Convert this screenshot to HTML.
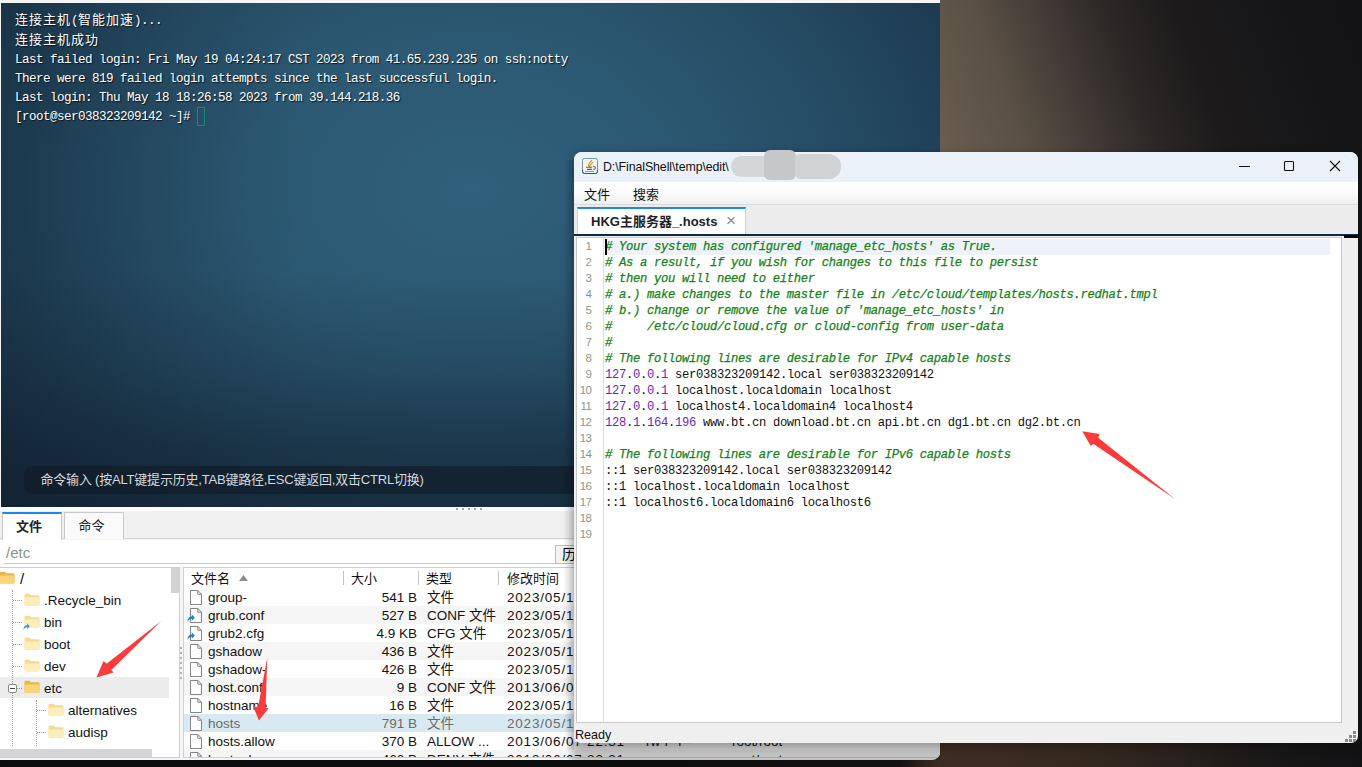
<!DOCTYPE html>
<html lang="zh-CN">
<head>
<meta charset="utf-8">
<title>FinalShell</title>
<style>
*{box-sizing:border-box;margin:0;padding:0}
html,body{width:1362px;height:767px;overflow:hidden}
body{position:relative;background:#151416;font-family:"Liberation Sans","Noto Sans CJK SC",sans-serif;color:#000}
.abs{position:absolute}
/* wallpaper */
#wall{left:940px;top:0;width:422px;height:152px;background:linear-gradient(70deg,#6a5e50 0%,#64594c 5.8%,#5a5045 18.4%,#453d37 30.9%,#2d2827 45.6%,#1c1a1b 60.3%,#171618 77%,#131316 94%)}
#wallb{left:0;top:742px;width:1362px;height:25px;background:linear-gradient(90deg,#0c0c0e 0,#0e0d0e 600px,#141112 900px,#3d2c22 940px,#3b2b21 1010px,#33281f 1100px,#28211d 1180px,#1a1818 1260px,#121214 1362px)}
/* main window */
#main{left:0;top:0;width:940px;height:760px;background:#f5f5f5;border-radius:0 0 8px 0;overflow:hidden}
#term{left:1px;top:3px;width:939px;height:504px;background:
 linear-gradient(90deg,rgba(16,30,44,.26) 0,rgba(16,30,44,.12) 150px,rgba(16,30,44,0) 300px),
 linear-gradient(180deg,rgba(14,26,40,0) 0,rgba(14,26,40,0) 270px,rgba(14,26,40,.2) 375px,rgba(14,26,40,.42) 445px,rgba(14,26,40,.52) 504px),
 radial-gradient(ellipse 650px 480px at 470px 185px,#30607b 0%,#2b5771 35%,#244a62 60%,#1d3c52 80%,#182f42 100%),
 linear-gradient(180deg,#1b384e 0,#1c3b52 40%,#15293a 85%,#13222e 100%)}
.tl{position:absolute;left:14px;white-space:pre;color:#fff;font-family:"Liberation Mono","Noto Sans CJK SC",monospace;font-size:12.6px;letter-spacing:-0.56px;line-height:19px;height:19px;text-shadow:1px 1px 1px #0a141c}
.tl .c{font-size:13px;letter-spacing:1px;font-family:"Noto Sans CJK SC","Liberation Mono",monospace}
#cursor{left:196px;top:104px;width:8px;height:19px;border:1.5px solid #1a8a6a}
#cmd{left:22.5px;top:462.5px;width:930px;height:28px;border-radius:9px;background:rgba(16,26,38,.62)}
#cmd span{position:absolute;left:17px;top:0;line-height:28px;font-size:13px;color:#d4d9dd;white-space:pre;letter-spacing:-0.2px}

/* lower panel */
#sep{left:0;top:507px;width:940px;height:4px;background:#fdfdfd}
#tabs{left:0;top:511px;width:940px;height:28px;background:#f0f0f0;border-bottom:1px solid #d5d5d5}
.tab{position:absolute;top:1px;height:27px;border:1px solid #c8c8c8;border-bottom:none;background:#fff;font-size:13px;text-align:center;line-height:26px;color:#222}
#tab1{left:2px;width:60px;top:1px;height:28px;padding-right:6px;border-top:2px solid #1e88e5;font-weight:bold;line-height:26px;border-color:#1e88e5 #c8c8c8 #fff #c8c8c8}
#tab2{left:64px;width:60px;background:#fafafa;padding-right:5px}
#path{left:0;top:540px;width:940px;height:27px;background:#fff}
#path .p{position:absolute;left:6px;top:0;line-height:26px;font-size:15px;color:#8b928b}
#path .ul{position:absolute;left:4px;top:23px;width:936px;height:1px;background:#c9c9c9}
#hist{left:555px;top:5px;width:60px;height:19px;border:1px solid #bdbdbd;background:#f3f3f3;font-size:14px;line-height:17px;padding-left:6px}
#tree{left:0;top:567px;width:180px;height:191px;background:#fff;border:1px solid #cfcfcf;border-left:none;overflow:hidden}
#list{left:183px;top:567px;width:760px;height:191px;background:#fff;border:1px solid #cfcfcf;overflow:hidden}
.tr{position:absolute;left:0;height:22px;line-height:22px;font-size:13.5px;white-space:pre;color:#111}
.tr.sel{background:#ececec;width:169px}
.fo{position:absolute;top:2.5px;width:16px;height:13.2px}
.lr{position:absolute;left:0;width:760px;height:18px;line-height:18px;font-size:13.5px;white-space:pre;color:#111}
.lr.odd{background:#f5f5f5}
.lr.sel{background:#d9e9f2;color:#6a6a6a}
.lr span{position:absolute;top:1px}
.lr .n{left:24px}.lr .s{left:100px;width:133px;text-align:right}.lr .t{left:243px}.lr .d{left:323px;letter-spacing:.8px}.lr .pm{left:462px}.lr .ow{left:548px}
.fi{position:absolute;left:6px;top:1.5px;width:12px;height:15px}
.hd{position:absolute;top:1px;height:20px;line-height:20px;font-size:13px;color:#111}
.hs{position:absolute;top:3px;width:1px;height:14px;background:#c4c4c4}

/* editor window */
#edsh{left:574px;top:152px;width:784px;height:591px;border-radius:8px;box-shadow:0 3px 10px 1px rgba(0,0,0,.28)}
#ed{left:574px;top:152px;width:784px;height:591px;border-radius:8px 8px 7px 7px;background:#efefef;overflow:hidden}
#ttl{left:0;top:0;width:784px;height:30px;background:#ebf1f9}
#ttl .tx{position:absolute;left:29px;top:0;line-height:30px;font-size:12.4px;color:#111;white-space:pre;letter-spacing:-0.1px}
#menu{left:0;top:30px;width:784px;height:23px;background:linear-gradient(180deg,#ffffff 0,#fbfbfb 50%,#efefef 100%);border-bottom:1px solid #dcdcdc}
#menu span{position:absolute;top:1px;line-height:23px;font-size:13px;color:#111}
#etabs{left:0;top:53px;width:784px;height:29px;background:#ececec}
#etab{left:3px;top:2px;width:169px;height:27px;background:#fff;border:1px solid #cfcfcf;border-top:2px solid #1e88e5;border-bottom:none}
#etab b{position:absolute;left:13px;top:0;line-height:25px;font-size:13px;color:#222;white-space:pre}
#etab i{position:absolute;left:148px;top:0;line-height:24px;font-style:normal;font-size:17px;color:#8a8a8a}
#navy{left:0;top:82px;width:784px;height:2px;background:#0c2a4a}
#navy2{left:770px;top:83px;width:14px;height:3px;background:#050a10}
#code{left:2px;top:85px;width:766px;height:486px;background:#fff;border:1px solid #c9c9c9;overflow:hidden}
#gut{left:0;top:0;width:27px;height:486px;border-right:1px solid #dcdcdc;background:#fff}
.ln{position:absolute;left:0;width:14.5px;text-align:right;font-family:"Liberation Sans",sans-serif;font-size:11.5px;letter-spacing:-0.5px;color:#8a988c;height:16px;line-height:16px}
.cl{position:absolute;left:28px;height:16px;line-height:16px;white-space:pre;font-family:"Liberation Mono",monospace;font-size:12.2px;letter-spacing:-0.32px;color:#111}
.cm{color:#138213;font-style:italic;-webkit-text-stroke:0.25px #138213}
.ip{color:#6c1fc4}
.dt{color:#111}
#curline{left:28px;top:1px;width:725px;height:16px;background:#eef3fb}
#caret{left:28px;top:1px;width:2px;height:16px;background:#000}
#stat{left:0;top:571px;width:784px;height:20px}
#stat span{position:absolute;left:1px;top:4px;font-size:12.6px;line-height:16px;color:#111}
</style>
</head>
<body>
<div id="wall" class="abs"></div>
<div id="wallb" class="abs"></div>
<div id="main" class="abs">
 <div id="term" class="abs">
  <div class="tl" style="top:5.5px"><span class="c">连接主机</span>(<span class="c">智能加速</span>)...</div>
  <div class="tl" style="top:25.5px"><span class="c">连接主机成功</span></div>
  <div class="tl" style="top:47.7px">Last failed login: Fri May 19 04:24:17 CST 2023 from 41.65.239.235 on ssh:notty</div>
  <div class="tl" style="top:66.7px">There were 819 failed login attempts since the last successful login.</div>
  <div class="tl" style="top:85.7px">Last login: Thu May 18 18:26:58 2023 from 39.144.218.36</div>
  <div class="tl" style="top:105px">[root@ser038323209142 ~]# </div>
  <div id="cursor" class="abs"></div>
  <div id="cmd" class="abs"><span>命令输入 (按ALT键提示历史,TAB键路径,ESC键返回,双击CTRL切换)</span></div>
 </div>
 <div id="sep" class="abs"><div class="abs" style="left:456px;top:1px;width:29px;height:2px;background:repeating-linear-gradient(90deg,#98a4ae 0 2px,transparent 2px 6px)"></div></div>
 <div id="tabs" class="abs"><div class="tab" id="tab1">文件</div><div class="tab" id="tab2">命令</div></div>
 <div id="path" class="abs"><span class="p">/etc</span><div class="ul"></div><div id="hist" class="abs">历史</div></div>
 <div id="tree" class="abs">
<div class="tr" style="top:0px;width:178px"><svg class="fo" style="left:-1px" viewBox="0 0 17 14"><path d="M0.5 2.2Q0.5 0.8 1.8 0.8H6l1.6 1.7h7.6q1.3 0 1.3 1.3V12q0 1.3-1.3 1.3H1.8Q0.5 13.3 0.5 12Z" fill="#e8b64a"/><path d="M0.5 4.8H16.5V12q0 1.3-1.3 1.3H1.8Q0.5 13.3 0.5 12Z" fill="#fad577"/></svg><span style="position:absolute;left:20px;top:0;font-size:15px">/</span></div>
<div class="tr" style="top:22px;width:178px"><svg class="fo" style="left:24px" viewBox="0 0 17 14"><path d="M0.5 2.2Q0.5 0.8 1.8 0.8H6l1.6 1.7h7.6q1.3 0 1.3 1.3V12q0 1.3-1.3 1.3H1.8Q0.5 13.3 0.5 12Z" fill="#f5dc94"/><path d="M0.5 4.8H16.5V12q0 1.3-1.3 1.3H1.8Q0.5 13.3 0.5 12Z" fill="#fdedb9"/></svg><span style="position:absolute;left:44px;top:0">.Recycle_bin</span></div>
<div class="tr" style="top:44px;width:178px"><svg class="fo" style="left:24px" viewBox="0 0 17 14"><path d="M0.5 2.2Q0.5 0.8 1.8 0.8H6l1.6 1.7h7.6q1.3 0 1.3 1.3V12q0 1.3-1.3 1.3H1.8Q0.5 13.3 0.5 12Z" fill="#f5dc94"/><path d="M0.5 4.8H16.5V12q0 1.3-1.3 1.3H1.8Q0.5 13.3 0.5 12Z" fill="#fdedb9"/></svg><svg class="abs" style="left:23px;top:11px" width="7" height="7" viewBox="0 0 7 7"><path d="M0.5 6.8C0.5 3.4 2.2 2.2 4.2 2.2V0.3L6.8 3.2L4.2 6V4.2C2.8 4.2 1.6 4.8 0.5 6.8Z" fill="#3d93e8"/></svg><span style="position:absolute;left:44px;top:0">bin</span></div>
<div class="tr" style="top:66px;width:178px"><svg class="fo" style="left:24px" viewBox="0 0 17 14"><path d="M0.5 2.2Q0.5 0.8 1.8 0.8H6l1.6 1.7h7.6q1.3 0 1.3 1.3V12q0 1.3-1.3 1.3H1.8Q0.5 13.3 0.5 12Z" fill="#f5dc94"/><path d="M0.5 4.8H16.5V12q0 1.3-1.3 1.3H1.8Q0.5 13.3 0.5 12Z" fill="#fdedb9"/></svg><span style="position:absolute;left:44px;top:0">boot</span></div>
<div class="tr" style="top:88px;width:178px"><svg class="fo" style="left:24px" viewBox="0 0 17 14"><path d="M0.5 2.2Q0.5 0.8 1.8 0.8H6l1.6 1.7h7.6q1.3 0 1.3 1.3V12q0 1.3-1.3 1.3H1.8Q0.5 13.3 0.5 12Z" fill="#f5dc94"/><path d="M0.5 4.8H16.5V12q0 1.3-1.3 1.3H1.8Q0.5 13.3 0.5 12Z" fill="#fdedb9"/></svg><span style="position:absolute;left:44px;top:0">dev</span></div>
<div class="tr sel" style="top:109px;height:21px;line-height:24px"><svg class="fo" style="left:24px" viewBox="0 0 17 14"><path d="M0.5 2.2Q0.5 0.8 1.8 0.8H6l1.6 1.7h7.6q1.3 0 1.3 1.3V12q0 1.3-1.3 1.3H1.8Q0.5 13.3 0.5 12Z" fill="#e8b64a"/><path d="M0.5 4.8H16.5V12q0 1.3-1.3 1.3H1.8Q0.5 13.3 0.5 12Z" fill="#fad577"/></svg><span style="position:absolute;left:44px;top:0">etc</span></div>
<div class="tr" style="top:132px;width:178px"><svg class="fo" style="left:48px" viewBox="0 0 17 14"><path d="M0.5 2.2Q0.5 0.8 1.8 0.8H6l1.6 1.7h7.6q1.3 0 1.3 1.3V12q0 1.3-1.3 1.3H1.8Q0.5 13.3 0.5 12Z" fill="#f5dc94"/><path d="M0.5 4.8H16.5V12q0 1.3-1.3 1.3H1.8Q0.5 13.3 0.5 12Z" fill="#fdedb9"/></svg><span style="position:absolute;left:68px;top:0">alternatives</span></div>
<div class="tr" style="top:154px;width:178px"><svg class="fo" style="left:48px" viewBox="0 0 17 14"><path d="M0.5 2.2Q0.5 0.8 1.8 0.8H6l1.6 1.7h7.6q1.3 0 1.3 1.3V12q0 1.3-1.3 1.3H1.8Q0.5 13.3 0.5 12Z" fill="#f5dc94"/><path d="M0.5 4.8H16.5V12q0 1.3-1.3 1.3H1.8Q0.5 13.3 0.5 12Z" fill="#fdedb9"/></svg><span style="position:absolute;left:68px;top:0">audisp</span></div>
<div class="abs" style="left:12px;top:22px;width:0;height:156px;border-left:1px dotted #9a9a9a"></div><div class="abs" style="left:13px;top:32px;width:9px;height:0;border-top:1px dotted #9a9a9a"></div><div class="abs" style="left:13px;top:54px;width:9px;height:0;border-top:1px dotted #9a9a9a"></div><div class="abs" style="left:13px;top:76px;width:9px;height:0;border-top:1px dotted #9a9a9a"></div><div class="abs" style="left:13px;top:98px;width:9px;height:0;border-top:1px dotted #9a9a9a"></div><div class="abs" style="left:13px;top:120px;width:9px;height:0;border-top:1px dotted #9a9a9a"></div><div class="abs" style="left:36px;top:132px;width:0;height:46px;border-left:1px dotted #9a9a9a"></div><div class="abs" style="left:37px;top:142px;width:9px;height:0;border-top:1px dotted #9a9a9a"></div><div class="abs" style="left:37px;top:164px;width:9px;height:0;border-top:1px dotted #9a9a9a"></div><div class="abs" style="left:8px;top:116px;width:9px;height:9px;border:1px solid #8c8c8c;border-radius:2px;background:#fff"><div class="abs" style="left:1px;top:3px;width:5px;height:1px;background:#444"></div></div><div class="abs" style="left:169px;top:0;width:9px;height:191px;background:#fff"></div><div class="abs" style="left:171px;top:0;width:8px;height:25px;background:#d2d2d2"></div><div class="abs" style="left:0;top:181px;width:152px;height:9px;background:#d4d4d4"></div> </div>
 <div class="abs" style="left:180px;top:647px;width:2px;height:32px;background:repeating-linear-gradient(180deg,#b4b4b4 0 2px,transparent 2px 5px)"></div>
 <div id="list" class="abs">
<div class="abs" style="left:0;top:0;width:760px;height:20px;background:#fff"><span class="hd" style="left:7px">文件名</span><svg class="abs" style="left:55px;top:7px" width="9" height="6" viewBox="0 0 9 6"><path d="M0 6L4.5 0L9 6Z" fill="#8a8a8a"/></svg><div class="hs" style="left:159px"></div><span class="hd" style="left:167px">大小</span><div class="hs" style="left:234px"></div><span class="hd" style="left:242px">类型</span><div class="hs" style="left:314px"></div><span class="hd" style="left:323px">修改时间</span><div class="hs" style="left:454px"></div><span class="hd" style="left:462px">权限</span><div class="hs" style="left:539px"></div><span class="hd" style="left:548px">用户/用户组</span></div>
<div class="lr" style="top:20px"><svg class="fi" viewBox="0 0 13 16" preserveAspectRatio="none"><path d="M0.5 0.5H8.5L12.5 4.5V15.5H0.5Z" fill="#fff" stroke="#777" stroke-width="1"/><path d="M8.5 0.5V4.5H12.5" fill="none" stroke="#777" stroke-width="1"/></svg><span class="n">group-</span><span class="s">541 B</span><span class="t">文件</span><span class="d">2023/05/18 18:27</span><span class="pm">rw-r--r--</span><span class="ow">root/root</span></div>
<div class="lr odd" style="top:38px"><svg class="fi" viewBox="0 0 13 16" preserveAspectRatio="none"><path d="M0.5 0.5H8.5L12.5 4.5V15.5H0.5Z" fill="#fff" stroke="#777" stroke-width="1"/><path d="M8.5 0.5V4.5H12.5" fill="none" stroke="#777" stroke-width="1"/></svg><svg class="abs" style="left:3px;top:8px" width="8" height="8" viewBox="0 0 7 7"><path d="M0.5 6.8C0.5 3.4 2.2 2.2 4.2 2.2V0.3L6.8 3.2L4.2 6V4.2C2.8 4.2 1.6 4.8 0.5 6.8Z" fill="#1f7ae0"/></svg><span class="n">grub.conf</span><span class="s">527 B</span><span class="t">CONF 文件</span><span class="d">2023/05/18 18:27</span><span class="pm">rwxrwxrwx</span><span class="ow">root/root</span></div>
<div class="lr" style="top:56px"><svg class="fi" viewBox="0 0 13 16" preserveAspectRatio="none"><path d="M0.5 0.5H8.5L12.5 4.5V15.5H0.5Z" fill="#fff" stroke="#777" stroke-width="1"/><path d="M8.5 0.5V4.5H12.5" fill="none" stroke="#777" stroke-width="1"/></svg><svg class="abs" style="left:3px;top:8px" width="8" height="8" viewBox="0 0 7 7"><path d="M0.5 6.8C0.5 3.4 2.2 2.2 4.2 2.2V0.3L6.8 3.2L4.2 6V4.2C2.8 4.2 1.6 4.8 0.5 6.8Z" fill="#1f7ae0"/></svg><span class="n">grub2.cfg</span><span class="s">4.9 KB</span><span class="t">CFG 文件</span><span class="d">2023/05/18 18:27</span><span class="pm">rwxrwxrwx</span><span class="ow">root/root</span></div>
<div class="lr odd" style="top:74px"><svg class="fi" viewBox="0 0 13 16" preserveAspectRatio="none"><path d="M0.5 0.5H8.5L12.5 4.5V15.5H0.5Z" fill="#fff" stroke="#777" stroke-width="1"/><path d="M8.5 0.5V4.5H12.5" fill="none" stroke="#777" stroke-width="1"/></svg><span class="n">gshadow</span><span class="s">436 B</span><span class="t">文件</span><span class="d">2023/05/18 18:27</span><span class="pm">---------</span><span class="ow">root/root</span></div>
<div class="lr" style="top:92px"><svg class="fi" viewBox="0 0 13 16" preserveAspectRatio="none"><path d="M0.5 0.5H8.5L12.5 4.5V15.5H0.5Z" fill="#fff" stroke="#777" stroke-width="1"/><path d="M8.5 0.5V4.5H12.5" fill="none" stroke="#777" stroke-width="1"/></svg><span class="n">gshadow-</span><span class="s">426 B</span><span class="t">文件</span><span class="d">2023/05/18 18:27</span><span class="pm">---------</span><span class="ow">root/root</span></div>
<div class="lr odd" style="top:110px"><svg class="fi" viewBox="0 0 13 16" preserveAspectRatio="none"><path d="M0.5 0.5H8.5L12.5 4.5V15.5H0.5Z" fill="#fff" stroke="#777" stroke-width="1"/><path d="M8.5 0.5V4.5H12.5" fill="none" stroke="#777" stroke-width="1"/></svg><span class="n">host.conf</span><span class="s">9 B</span><span class="t">CONF 文件</span><span class="d">2013/06/07 22:31</span><span class="pm">rw-r--r--</span><span class="ow">root/root</span></div>
<div class="lr" style="top:128px"><svg class="fi" viewBox="0 0 13 16" preserveAspectRatio="none"><path d="M0.5 0.5H8.5L12.5 4.5V15.5H0.5Z" fill="#fff" stroke="#777" stroke-width="1"/><path d="M8.5 0.5V4.5H12.5" fill="none" stroke="#777" stroke-width="1"/></svg><span class="n">hostname</span><span class="s">16 B</span><span class="t">文件</span><span class="d">2023/05/18 18:27</span><span class="pm">rw-r--r--</span><span class="ow">root/root</span></div>
<div class="lr sel" style="top:146px"><svg class="fi" viewBox="0 0 13 16" preserveAspectRatio="none"><path d="M0.5 0.5H8.5L12.5 4.5V15.5H0.5Z" fill="#fff" stroke="#777" stroke-width="1"/><path d="M8.5 0.5V4.5H12.5" fill="none" stroke="#777" stroke-width="1"/></svg><span class="n">hosts</span><span class="s">791 B</span><span class="t">文件</span><span class="d">2023/05/19 04:30</span><span class="pm">rw-r--r--</span><span class="ow">root/root</span></div>
<div class="lr" style="top:164px"><svg class="fi" viewBox="0 0 13 16" preserveAspectRatio="none"><path d="M0.5 0.5H8.5L12.5 4.5V15.5H0.5Z" fill="#fff" stroke="#777" stroke-width="1"/><path d="M8.5 0.5V4.5H12.5" fill="none" stroke="#777" stroke-width="1"/></svg><span class="n">hosts.allow</span><span class="s">370 B</span><span class="t">ALLOW ...</span><span class="d">2013/06/07 22:31</span><span class="pm">rw-r--r--</span><span class="ow">root/root</span></div>
<div class="lr odd" style="top:182px"><svg class="fi" viewBox="0 0 13 16" preserveAspectRatio="none"><path d="M0.5 0.5H8.5L12.5 4.5V15.5H0.5Z" fill="#fff" stroke="#777" stroke-width="1"/><path d="M8.5 0.5V4.5H12.5" fill="none" stroke="#777" stroke-width="1"/></svg><span class="n">hosts.deny</span><span class="s">460 B</span><span class="t">DENY 文件</span><span class="d">2013/06/07 22:31</span><span class="pm">rw-r--r--</span><span class="ow">root/root</span></div>
 </div>
<!--LOWER-END-->
</div>
<div class="abs" style="left:566px;top:742px;width:374px;height:18px;background:linear-gradient(90deg,rgba(0,0,0,0) 0,rgba(0,0,0,.2) 10px,rgba(0,0,0,.2) 100%)"></div>
<div class="abs" style="left:563px;top:160px;width:11px;height:590px;background:linear-gradient(90deg,rgba(0,0,0,0),rgba(0,0,0,.13))"></div>
<div id="edsh" class="abs"></div>
<div id="ed" class="abs">
 <div id="ttl" class="abs">
  <svg class="abs" style="left:8px;top:6px" width="16" height="16" viewBox="0 0 16 16"><rect x="0.5" y="0.5" width="15" height="15" rx="2" fill="#f3f3f3" stroke="#8d8d8d"/><path d="M1.5 0.5h13" stroke="#5fa8cf" stroke-width="1" stroke-dasharray="1 1"/><path d="M0.6 12V13.5Q0.6 15.5 2.5 15.5H13.5Q15.4 15.5 15.4 13.5V12" fill="none" stroke="#2c5878" stroke-width="1"/><path d="M7.6 8.8C5 6.5 8 4.5 9.7 2.4M7.9 8.8C7 6.8 9.6 6 10.7 4.6" stroke="#d3a21c" stroke-width="1.3" fill="none" stroke-linecap="round"/><path d="M4 9.3h6.2M5.1 11.4h4.8" stroke="#4f6478" stroke-width="1.1" fill="none"/><path d="M3 13.4h9" stroke="#8c949c" stroke-width="1" fill="none"/><path d="M11.3 8.4c2.8 0.2 2.8 3 0 3.1" stroke="#4f6478" stroke-width="1.1" fill="none"/></svg>
  <span class="tx">D:\FinalShell\temp\edit\</span>
  
  <svg class="abs" style="left:661px;top:6px" width="120" height="18" viewBox="0 0 120 18"><path d="M4 8.5h11" stroke="#111" stroke-width="1.1"/><rect x="49.5" y="3.5" width="9" height="9" rx="1" fill="none" stroke="#111" stroke-width="1.1"/><path d="M95 3l10 10M105 3l-10 10" stroke="#111" stroke-width="1.1"/></svg>
 </div>
 <div id="menu" class="abs"><span style="left:10px">文件</span><span style="left:59px">搜索</span></div>
 <div id="etabs" class="abs"><div id="etab" class="abs"><b>HKG主服务器_.hosts</b><i>×</i></div></div>
 <div id="navy" class="abs"></div><div id="navy2" class="abs"></div>
 <div id="code" class="abs">
  <div id="curline" class="abs"></div>
  <div id="gut" class="abs"></div>
<div class="ln" style="top:0px">1</div><div class="cl cm" style="top:1px"># Your system has configured 'manage_etc_hosts' as True.</div>
<div class="ln" style="top:16px">2</div><div class="cl cm" style="top:17px"># As a result, if you wish for changes to this file to persist</div>
<div class="ln" style="top:32px">3</div><div class="cl cm" style="top:33px"># then you will need to either</div>
<div class="ln" style="top:48px">4</div><div class="cl cm" style="top:49px"># a.) make changes to the master file in /etc/cloud/templates/hosts.redhat.tmpl</div>
<div class="ln" style="top:64px">5</div><div class="cl cm" style="top:65px"># b.) change or remove the value of 'manage_etc_hosts' in</div>
<div class="ln" style="top:80px">6</div><div class="cl cm" style="top:81px">#     /etc/cloud/cloud.cfg or cloud-config from user-data</div>
<div class="ln" style="top:96px">7</div><div class="cl cm" style="top:97px">#</div>
<div class="ln" style="top:112px">8</div><div class="cl cm" style="top:113px"># The following lines are desirable for IPv4 capable hosts</div>
<div class="ln" style="top:128px">9</div><div class="cl" style="top:129px"><span class="ip">127<span class="dt">.</span>0<span class="dt">.</span>0<span class="dt">.</span>1</span> ser038323209142.local ser038323209142</div>
<div class="ln" style="top:144px">10</div><div class="cl" style="top:145px"><span class="ip">127<span class="dt">.</span>0<span class="dt">.</span>0<span class="dt">.</span>1</span> localhost.localdomain localhost</div>
<div class="ln" style="top:160px">11</div><div class="cl" style="top:161px"><span class="ip">127<span class="dt">.</span>0<span class="dt">.</span>0<span class="dt">.</span>1</span> localhost4.localdomain4 localhost4</div>
<div class="ln" style="top:176px">12</div><div class="cl" style="top:177px"><span class="ip">128<span class="dt">.</span>1<span class="dt">.</span>164<span class="dt">.</span>196</span> www.bt.cn download.bt.cn api.bt.cn dg1.bt.cn dg2.bt.cn</div>
<div class="ln" style="top:192px">13</div>
<div class="ln" style="top:208px">14</div><div class="cl cm" style="top:209px"># The following lines are desirable for IPv6 capable hosts</div>
<div class="ln" style="top:224px">15</div><div class="cl" style="top:225px">::1 ser038323209142.local ser038323209142</div>
<div class="ln" style="top:240px">16</div><div class="cl" style="top:241px">::1 localhost.localdomain localhost</div>
<div class="ln" style="top:256px">17</div><div class="cl" style="top:257px">::1 localhost6.localdomain6 localhost6</div>
<div class="ln" style="top:272px">18</div>
<div class="ln" style="top:288px">19</div>
  <div id="caret" class="abs"></div>
 </div>
 <div id="stat" class="abs"><span>Ready</span>
  <svg class="abs" style="left:771px;top:8px" width="12" height="12" viewBox="0 0 12 12"><g fill="#8a8a8a"><rect x="8" y="0" width="3" height="3"/><rect x="4" y="4" width="3" height="3"/><rect x="8" y="4" width="3" height="3"/><rect x="0" y="8" width="3" height="3"/><rect x="4" y="8" width="3" height="3"/><rect x="8" y="8" width="3" height="3"/></g></svg>
 </div>
</div>
<div class="abs" style="left:731px;top:155px;width:112px;height:25px;filter:blur(.7px)"><div class="abs" style="left:0;top:1px;width:40px;height:21px;border-radius:10px 4px 4px 10px;background:#d5d6d8"></div><div class="abs" style="left:33px;top:-5px;width:32px;height:30px;border-radius:6px;background:#c6c7c9"></div><div class="abs" style="left:64px;top:-1px;width:46px;height:25px;border-radius:5px 12px 12px 5px;background:#d1d2d4"></div></div>
<!--EDITOR-END-->
<svg class="abs" style="left:0;top:0" width="1362" height="767" viewBox="0 0 1362 767">
<g fill="#fb3b3b">
<path d="M161.3 621L106.6 663.7L103.5 661.1L96.5 677.6L113.6 672.6L111.3 670Z"/>
<path d="M267.3 657.5L258.1 706.9L253.1 706.3L259 720.6L268.8 708.1L265.6 707.5Z"/>
<path d="M1175.3 499.3L1098.2 437.7L1099.7 434.1L1082.2 431.2L1090.7 445.8L1093.6 443.9Z"/>
</g></svg>

</body>
</html>
